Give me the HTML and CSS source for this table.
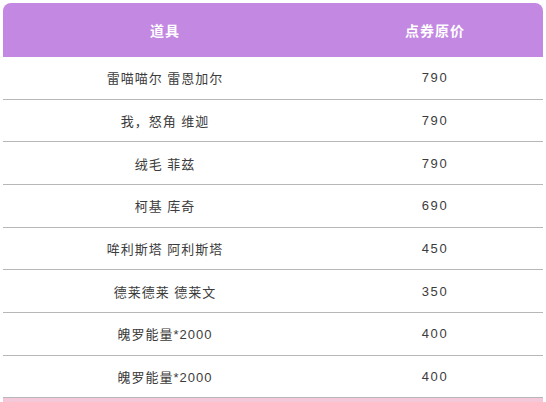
FILE: index.html
```html
<!DOCTYPE html>
<html lang="zh">
<head>
<meta charset="utf-8">
<link rel="stylesheet" href="styles.css">
</head>
<body>
<div class="wrap">
  <div class="table">
    <div class="row head">
      <div class="cell">道具</div>
      <div class="cell">点券原价</div>
    </div>
    <div class="row"><div class="cell">雷喵喵尔 雷恩加尔</div><div class="cell num">790</div></div>
    <div class="row"><div class="cell">我，怒角 维迦</div><div class="cell num">790</div></div>
    <div class="row"><div class="cell">绒毛 菲兹</div><div class="cell num">790</div></div>
    <div class="row"><div class="cell">柯基 库奇</div><div class="cell num">690</div></div>
    <div class="row"><div class="cell">哞利斯塔 阿利斯塔</div><div class="cell num">450</div></div>
    <div class="row"><div class="cell">德莱德莱 德莱文</div><div class="cell num">350</div></div>
    <div class="row"><div class="cell">魄罗能量*2000</div><div class="cell num">400</div></div>
    <div class="row"><div class="cell">魄罗能量*2000</div><div class="cell num">400</div></div>
    <div class="row pink"><div class="cell"></div><div class="cell"></div></div>
  </div>
</div>
</body>
</html>
```
FILE: styles.css
```css
html, body {
  margin: 0;
  padding: 0;
  background: #ffffff;
}
.wrap {
  padding: 3px 3px 0 3px;
  width: 540px;
}
.table {
  width: 540px;
  font-family: "Liberation Sans", "Noto Sans CJK SC", sans-serif;
}
.row {
  display: grid;
  grid-template-columns: 324px 216px;
  height: 42.67px;
  box-sizing: border-box;
  border-bottom: 1px solid #b7b7b7;
  color: #3c3c3c;
  font-size: 13px;
  letter-spacing: 1px;
}
.cell {
  display: flex;
  align-items: center;
  justify-content: center;
}
.num {
  letter-spacing: 1.6px;
}
.head {
  height: 54px;
  background: #c388e2;
  border-bottom: none;
  border-radius: 8px 8px 0 0;
  color: #ffffff;
  font-weight: bold;
  font-size: 14px;
}
.pink {
  background: #f4c8d8;
  border-bottom: none;
  height: 20px;
}
```
